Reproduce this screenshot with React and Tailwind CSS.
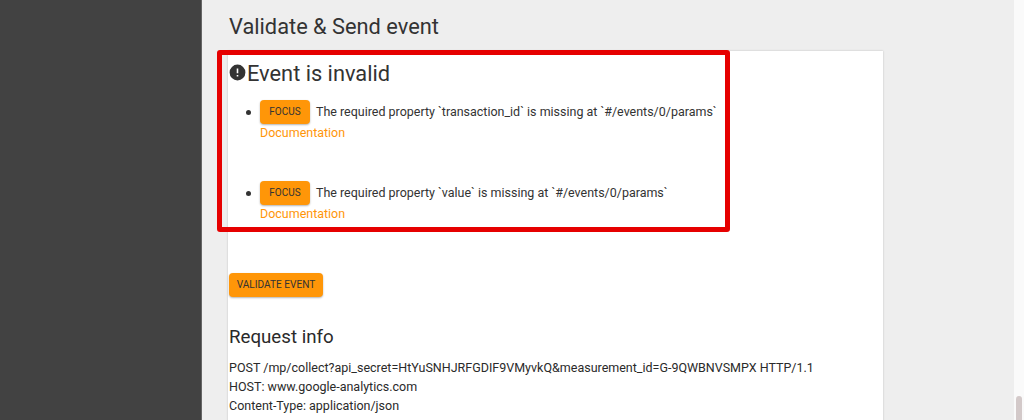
function ErrorItem({ message }) {
  return (
    <li className="flex gap-[5px] pl-[18px]">
      <span className="mt-[10px] h-[5px] w-[5px] shrink-0 rounded-full bg-[#333]"></span>
      <div className="pl-[4px]">
        <div className="flex items-center gap-[6px]">
          <button className="h-6 w-[50px] rounded-[4px] bg-[#ff9608] pb-[1px] text-[10px] text-[#333] shadow-[0_1px_2px_rgba(0,0,0,0.3)]">
            FOCUS
          </button>
          <span className="text-[12.48px] text-[#333]">{message}</span>
        </div>
        <a className="block text-[12.48px] leading-[18px] text-[#ff9608]">Documentation</a>
      </div>
    </li>
  );
}

export default function App() {
  return (
    <div className="relative flex h-[420px] w-[1024px] overflow-hidden bg-[#eeeeee] font-['Roboto',sans-serif]">
      <div className="w-[202px] shrink-0 border-r border-[#666] bg-[#424242]"></div>

      <main className="w-[681px] shrink-0 pl-[26px]">
        <h1 className="pt-[14px] pl-[1px] text-[21.8px] leading-[26px] text-[#333]">Validate &amp; Send event</h1>
        <section className="mt-[11px] h-[400px] bg-white shadow-[0_0_2px_rgba(0,0,0,0.2)]">
          <div className="flex items-center pt-[10px]">
            <svg viewBox="0 0 24 24" className="mb-[3px] h-[19px] w-[19px] fill-[#333]">
              <path d="M12 2a10 10 0 1 0 0 20 10 10 0 0 0 0-20zm1 15h-2v-2h2v2zm0-4h-2V7h2v6z" />
            </svg>
            <h2 className="text-[21.8px] leading-[26px] text-[#333]">Event is invalid</h2>
          </div>
          <ul className="mt-[13px] flex flex-col gap-[39px]">
            <ErrorItem message="The required property `transaction_id` is missing at `#/events/0/params`" />
            <ErrorItem message="The required property `value` is missing at `#/events/0/params`" />
          </ul>
          <button className="mt-[50px] ml-[1px] h-6 w-[94px] rounded-[4px] bg-[#ff9608] text-[10.1px] text-[#333] shadow-[0_1px_2px_rgba(0,0,0,0.3)]">
            VALIDATE EVENT
          </button>
          <h2 className="mt-[28px] pl-[1px] text-[18.7px] leading-[24px] text-[#2a2a2a]">Request info</h2>
          <div className="mt-[9px] pl-[1px] text-[12.5px] leading-[19px] text-[#2a2a2a]">
            <p>POST /mp/collect?api_secret=HtYuSNHJRFGDIF9VMyvkQ&amp;measurement_id=G-9QWBNVSMPX HTTP/1.1</p>
            <p>HOST: www.google-analytics.com</p>
            <p>Content-Type: application/json</p>
          </div>
        </section>
      </main>

      <div className="flex-1"></div>
      <div className="flex w-[10px] shrink-0 items-end justify-center bg-[#fafafa]">
        <div className="h-6 w-[6px] rounded-t-[3px] bg-[#d3c9c9]"></div>
      </div>

      {/* red annotation drawn over the screenshot */}
      <div className="absolute top-[50px] left-[217px] h-[182px] w-[513px] rounded-[3px] border-[5px] border-[#e60000]"></div>
    </div>
  );
}
